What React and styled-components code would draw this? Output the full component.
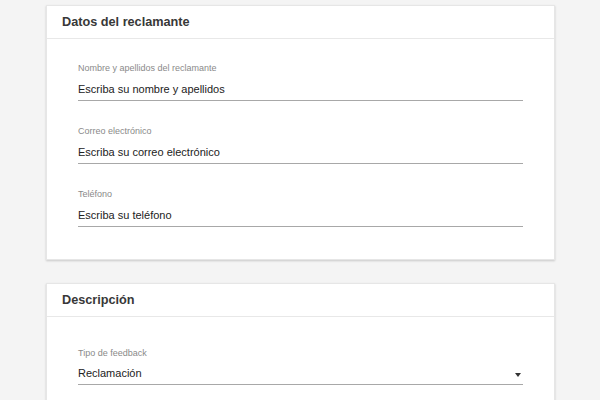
import styled, { createGlobalStyle } from 'styled-components'

const GlobalStyle = createGlobalStyle`
  html, body {
    margin: 0;
    background: #f4f4f4;
    font-family: "Liberation Sans", Arial, sans-serif;
  }
`

const Page = styled.div`
  width: 509px;
  margin: 0 auto;
  padding: 5px 0 0 1px;
  display: flex;
  flex-direction: column;
  gap: 23px;
`

const Card = styled.section`
  background: #fff;
  border: 1px solid #e6e6e6;
  box-shadow: 0 1px 2px rgba(0, 0, 0, 0.18);
`

const CardHeader = styled.div`
  height: 32px;
  display: flex;
  align-items: center;
  padding: 0 15px;
  border-bottom: 1px solid #e8e8e8;
  font-size: 12.7px;
  font-weight: 600;
  color: #383838;
`

const CardBody = styled.div`
  padding: 23px 31px 32px;
  display: flex;
  flex-direction: column;
  gap: 24px;
`

const Field = styled.label`
  display: flex;
  flex-direction: column;
  margin-top: ${p => p.$offset || 0}px;
`

const Label = styled.span`
  font-size: 9px;
  line-height: 12px;
  color: #8a8a8a;
`

const InputRow = styled.div`
  position: relative;
  height: ${p => (p.$select ? 26 : 27)}px;
  display: flex;
  align-items: center;
  padding-top: ${p => (p.$select ? 2 : 4)}px;
  box-sizing: border-box;
  border-bottom: 1px solid #a8a8a8;
  font-size: 11px;
  color: #222;
`

const Caret = styled.span`
  position: absolute;
  right: 2px;
  top: 14px;
  width: 0;
  height: 0;
  border-left: 3.5px solid transparent;
  border-right: 3.5px solid transparent;
  border-top: 4px solid #333;
`

const FormField = ({ label, value, select, offset }) => (
  <Field $offset={offset}>
    <Label>{label}</Label>
    <InputRow $select={select}>
      {value}
      {select && <Caret />}
    </InputRow>
  </Field>
)

export default function App() {
  return (
    <>
      <GlobalStyle />
      <Page>
        <Card>
          <CardHeader>Datos del reclamante</CardHeader>
          <CardBody>
            <FormField label="Nombre y apellidos del reclamante" value="Escriba su nombre y apellidos" />
            <FormField label="Correo electrónico" value="Escriba su correo electrónico" />
            <FormField label="Teléfono" value="Escriba su teléfono" />
          </CardBody>
        </Card>
        <Card>
          <CardHeader>Descripción</CardHeader>
          <CardBody>
            <FormField label="Tipo de feedback" value="Reclamación" select offset={7} />
          </CardBody>
        </Card>
      </Page>
    </>
  )
}
